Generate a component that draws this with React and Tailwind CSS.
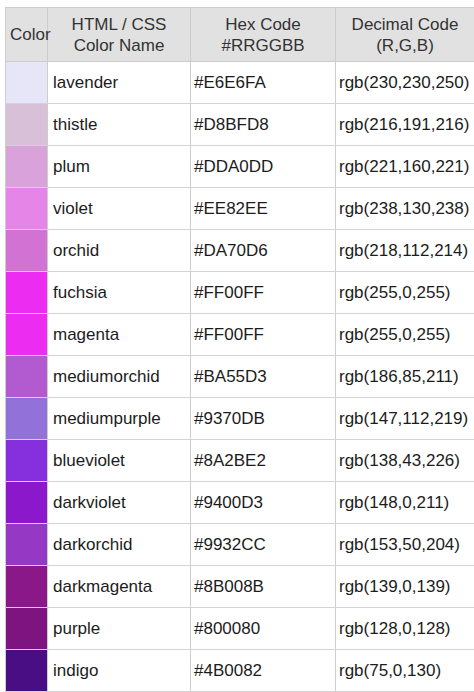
import React from "react";

const rows = [
  ["lavender", "#E6E6FA", "rgb(230,230,250)", "#e7e5f8"],
  ["thistle", "#D8BFD8", "rgb(216,191,216)", "#d8c0d8"],
  ["plum", "#DDA0DD", "rgb(221,160,221)", "#d9a2db"],
  ["violet", "#EE82EE", "rgb(238,130,238)", "#e685e8"],
  ["orchid", "#DA70D6", "rgb(218,112,214)", "#d272d2"],
  ["fuchsia", "#FF00FF", "rgb(255,0,255)", "#ec2cf0"],
  ["magenta", "#FF00FF", "rgb(255,0,255)", "#ec2cf0"],
  ["mediumorchid", "#BA55D3", "rgb(186,85,211)", "#b25ad0"],
  ["mediumpurple", "#9370DB", "rgb(147,112,219)", "#9272d8"],
  ["blueviolet", "#8A2BE2", "rgb(138,43,226)", "#8530dc"],
  ["darkviolet", "#9400D3", "rgb(148,0,211)", "#8c18cc"],
  ["darkorchid", "#9932CC", "rgb(153,50,204)", "#9538c4"],
  ["darkmagenta", "#8B008B", "rgb(139,0,139)", "#8a1888"],
  ["purple", "#800080", "rgb(128,0,128)", "#7e1480"],
  ["indigo", "#4B0082", "rgb(75,0,130)", "#4a0e84"],
];

export default function App() {
  return (
    <div
      className="w-[474px] h-[692px] overflow-hidden bg-white pt-[7px] pl-[5px]"
      style={{ fontFamily: '"Liberation Sans", Arial, sans-serif' }}
    >
      <div className="w-[475px] border-t border-l border-[#cdcdcd] text-[17px]">
        <div className="flex h-[54px] border-b border-[#cdcdcd] bg-[#e1e1e1] text-[#333] leading-[21px]">
          <div className="w-[42px] shrink-0 border-r border-[#cdcdcd] flex items-center pl-[4px] whitespace-nowrap overflow-visible relative z-10">
            Color
          </div>
          <div className="w-[143px] shrink-0 border-r border-[#cdcdcd] flex flex-col items-center justify-center text-center">
            <span>HTML / CSS</span>
            <span>Color Name</span>
          </div>
          <div className="w-[145px] shrink-0 border-r border-[#cdcdcd] flex flex-col items-center justify-center text-center">
            <span>Hex Code</span>
            <span>#RRGGBB</span>
          </div>
          <div className="w-[139px] shrink-0 border-r border-[#cdcdcd] flex flex-col items-center justify-center text-center">
            <span>Decimal Code</span>
            <span>(R,G,B)</span>
          </div>
        </div>
        {rows.map(([name, hex, rgb, sw]) => (
          <div key={name} className="flex h-[42px] border-b border-[#d3d3d3] text-[#1c1c1c]">
            <div className="w-[42px] shrink-0 border-r border-[#cdcdcd]" style={{ backgroundColor: sw }} />
            <div className="w-[143px] shrink-0 border-r border-[#cdcdcd] flex items-center pl-[5px]">
              {name}
            </div>
            <div className="w-[145px] shrink-0 border-r border-[#cdcdcd] flex items-center pl-[3px]">
              {hex}
            </div>
            <div className="w-[139px] shrink-0 border-r border-[#cdcdcd] flex items-center pl-[3px] whitespace-nowrap">
              {rgb}
            </div>
          </div>
        ))}
      </div>
    </div>
  );
}
